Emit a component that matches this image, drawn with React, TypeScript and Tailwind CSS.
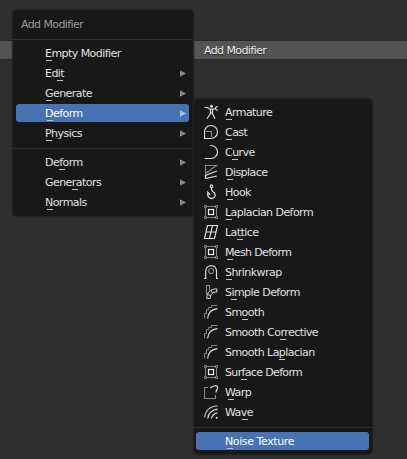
import React from "react";

type Entry = { label: string; mark: number; spacing?: number; icon?: React.ReactNode; arrow?: boolean; active?: boolean };

const Icon = ({ children }: { children: React.ReactNode }) => (
  <svg width="16" height="16" viewBox="1 0 16 16" fill="none" stroke="#dedede" strokeWidth="1.15" className="block shrink-0">
    {children}
  </svg>
);

const Armature = () => (
  <Icon>
    <circle cx="8.5" cy="2.3" r="1.5" fill="#dedede" stroke="none" />
    <path d="M1.5 3.5H4.5L6.5 5H10.5L12.5 4.6M7.5 5.2V9.5L4 14.8M9.5 5.2V9.5L12 14.8M7.5 9H9.5" />
    <path d="M14.8 2.8A1.7 1.7 0 1 0 14.8 6" />
  </Icon>
);
const Cast = () => (
  <Icon>
    <path d="M1.5 14.5V8A6.5 6.5 0 0 1 14.5 8A6.5 6.5 0 0 1 8 14.5Z" />
    <path d="M3 7.5H8.5V13" stroke="#8a8a8a" />
  </Icon>
);
const Curve = () => <Icon><path d="M1.5 14.5H8A6.5 6.5 0 0 0 8 1.5H7" /></Icon>;
const Displace = () => (
  <Icon>
    <path d="M2.5 9.5V1.5H13.5L2.5 9.5Z" stroke="#858585" />
    <path d="M13.8 7L2.5 11.5V14.5L13.8 12" />
  </Icon>
);
const Hook = () => (
  <Icon>
    <circle cx="8.5" cy="2.2" r="1.3" />
    <path d="M8.5 3.7V5.5C8.5 7.5 12.2 8 12.2 10.8A3.7 3.7 0 0 1 4.8 10.8V8.3L7 10.5" strokeWidth="1.3" />
  </Icon>
);
const Mesh = () => (
  <Icon>
    <path d="M3.5 2.5H12.5M3.5 13.5H12.5M2.5 3.5V12.5M13.5 3.5V12.5" stroke="#858585" strokeWidth="1" />
    <path d="M1.5 1.5h2v2h-2zM12.5 1.5h2v2h-2zM1.5 12.5h2v2h-2zM12.5 12.5h2v2h-2z" stroke="#858585" strokeWidth="1" />
    <rect x="5.5" y="5.5" width="5" height="5" stroke="#eee" strokeWidth="1.2" />
  </Icon>
);
const Lattice = () => <Icon><path d="M4.5 1.5H14.5L11.5 14.5H1.5ZM9.5 1.5L6.5 14.5M3 8H13" /></Icon>;
const Shrinkwrap = () => (
  <Icon>
    <path d="M1 14.5H2.7V7A5.4 5.4 0 0 1 13.5 7V14.5H15" />
    <circle cx="8.1" cy="7" r="2.5" stroke="#858585" />
  </Icon>
);
const SimpleDeform = () => (
  <Icon>
    <path d="M3.5 10V1.5H6.5V6" stroke="#858585" />
    <path d="M3.8 14.4C3.5 8.5 7.5 4.8 13.8 4.8V8C9.5 8 7.2 10.5 7.2 14.4ZM4.3 10.3L7.8 11.6M7.8 6.2L9.7 9" strokeWidth="1" />
  </Icon>
);
const Smooth = () => (
  <Icon>
    <path d="M1.5 14.5V9.5H3.5V5.5H5.5V3.5H8.5V1.5H14.5" stroke="#858585" strokeWidth="1" />
    <path d="M4.6 14.5C5 9 8.5 5.3 14.5 4.6" strokeWidth="1.2" />
  </Icon>
);
const Warp = () => (
  <Icon>
    <path d="M5 3.5H1.5V14.5H12.5V11" stroke="#858585" />
    <path d="M7 3.8L11 2Q14.5 1 14.5 3.2Q14.5 5 12.7 8.5" strokeWidth="1.2" />
  </Icon>
);
const Wave = () => (
  <Icon>
    <path d="M1.7 13.5C2 7 7 2 14.5 1.8" stroke="#aaa" strokeWidth="1.2" />
    <path d="M4.8 14.5C5 9.5 9 5.5 14.5 5.2" strokeWidth="1.2" />
    <path d="M8.5 14.5C9 11.5 11 9.3 14.5 8.8" strokeWidth="1.2" />
    <circle cx="13.7" cy="13.7" r="1" fill="#dedede" stroke="none" />
  </Icon>
);

const rootItems: Entry[] = [
  { label: "Empty Modifier", mark: 1 },
  { label: "Edit", mark: 12, arrow: true },
  { label: "Generate", mark: 1, arrow: true },
  { label: "Deform", mark: 2, arrow: true, active: true },
  { label: "Physics", mark: 1, arrow: true },
];
const recentItems: Entry[] = [
  { label: "Deform", mark: 14, arrow: true },
  { label: "Generators", mark: 27, arrow: true },
  { label: "Normals", mark: 2, arrow: true },
];
const deformItems: Entry[] = [
  { label: "Armature", mark: 1, icon: <Armature /> },
  { label: "Cast", mark: 1, icon: <Cast /> },
  { label: "Curve", mark: 7, icon: <Curve /> },
  { label: "Displace", mark: 2, icon: <Displace /> },
  { label: "Hook", mark: 2, icon: <Hook /> },
  { label: "Laplacian Deform", mark: 1, icon: <Mesh /> },
  { label: "Lattice", mark: 12, icon: <Lattice /> },
  { label: "Mesh Deform", mark: 2, spacing: -0.65, icon: <Mesh /> },
  { label: "Shrinkwrap", mark: 1, icon: <Shrinkwrap /> },
  { label: "Simple Deform", mark: 6, icon: <SimpleDeform /> },
  { label: "Smooth", mark: 17, icon: <Smooth /> },
  { label: "Smooth Corrective", mark: 55, icon: <Smooth /> },
  { label: "Smooth Laplacian", mark: 54, icon: <Smooth /> },
  { label: "Surface Deform", mark: 16, spacing: -0.65, icon: <Mesh /> },
  { label: "Warp", mark: 3, icon: <Warp /> },
  { label: "Wave", mark: 17, icon: <Wave /> },
];

function Item({ label, mark, spacing = -0.55, icon, arrow, active }: Entry) {
  return (
    <div className="flex h-5 items-center">
      <div className={`flex h-[18px] w-full items-center rounded-[3px] ${active ? "bg-[#4772b3] text-white" : "text-[#e0e0e0]"}`}>
        <span className="flex w-[29px] shrink-0 pl-2">{icon}</span>
        <span className="relative whitespace-nowrap pt-0.5 leading-[18px]" style={{ letterSpacing: spacing }}>
          {label}
          <i className="absolute top-[17px] h-px w-[6px] bg-[#c0c0c0]" style={{ left: mark }} />
        </span>
        {arrow && (
          <svg width="6" height="7" viewBox="0 0 6 7" className="mr-[3px] ml-auto">
            <path d="M0 .3L6 3.5L0 6.7Z" fill={active ? "#a9bedd" : "#898989"} />
          </svg>
        )}
      </div>
    </div>
  );
}

export default function App() {
  return (
    <div className="relative h-[459px] w-[407px] overflow-hidden bg-[#303030] pt-10 text-[11px] [font-family:'DejaVu_Sans',sans-serif]">
      <div className="flex h-5 items-center border-y border-[#292929] bg-[#545454] pt-0.5 pl-[204px] tracking-[-0.6px] text-[#eeeeee] [text-shadow:0_1px_1px_#222]">
        Add Modifier
      </div>
      <div className="absolute top-[10px] left-[13px] h-[206px] w-[180px] rounded-[4px] bg-[#181818] shadow-[0_0_2px_1px_#202020]">
        <div className="flex h-[29px] items-center pt-0.5 pl-2 tracking-[-0.6px] text-[#989898]">Add Modifier</div>
        <div className="mb-[3px] h-px bg-[#303030]" />
        <div className="pr-1 pl-[3px]">{rootItems.map((e) => <Item key={e.label} {...e} />)}</div>
        <div className="mt-[5px] mb-[3px] h-px bg-[#303030]" />
        <div className="pr-1 pl-[3px]">{recentItems.map((e) => <Item key={e.label} {...e} />)}</div>
      </div>
      <div className="absolute top-[99px] left-[194px] h-[355px] w-[178px] rounded-[4px] bg-[#181818] pt-[3px] shadow-[0_0_2px_1px_#202020]">
        <div className="pr-[3px] pl-[2px]">{deformItems.map((e) => <Item key={e.label} {...e} />)}</div>
        <div className="mt-[5px] mb-[3px] h-px bg-[#303030]" />
        <div className="pr-[3px] pl-[2px]"><Item label="Noise Texture" mark={2} spacing={-0.4} active /></div>
      </div>
    </div>
  );
}
